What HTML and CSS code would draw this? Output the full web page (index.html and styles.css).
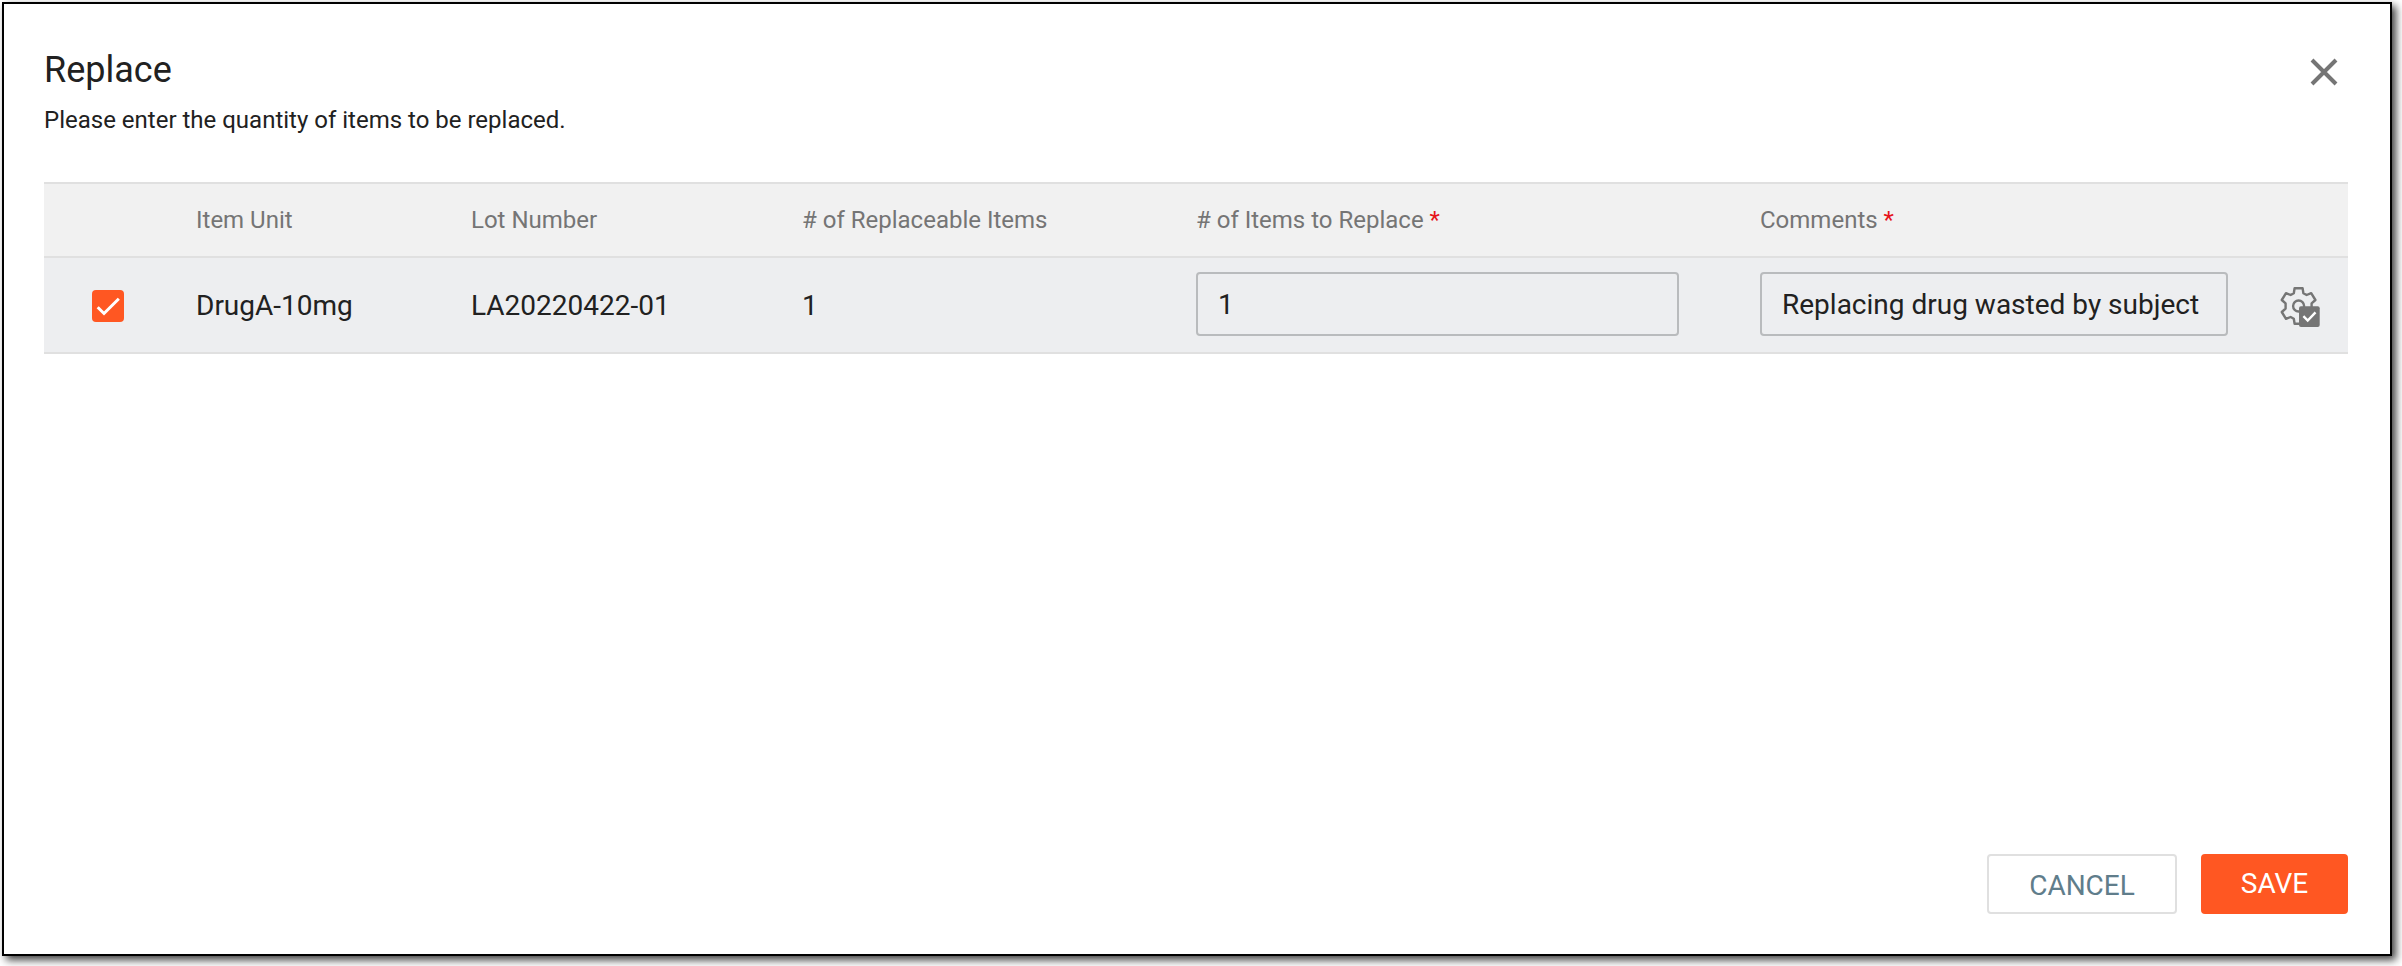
FILE: index.html
```
<!DOCTYPE html>
<html lang="en">
<head>
    <meta charset="UTF-8">
    <meta name="viewport" content="width=device-width, initial-scale=1.0">
    <title>Replace</title>
    <link rel="stylesheet" href="styles.css">
</head>
<body>
<div class="dialog">
    <div class="dialog-header">
        <div>
            <h1>Replace</h1>
            <p>Please enter the quantity of items to be replaced.</p>
        </div>
        <button class="close" aria-label="Close">
            <svg width="28" height="28" viewBox="0 0 28 28">
                <path d="M2 2L26 26M26 2L2 26"/>
            </svg>
        </button>
    </div>

    <table class="items">
        <colgroup>
            <col class="col-check">
            <col class="col-unit">
            <col class="col-lot">
            <col class="col-available">
            <col class="col-quantity">
            <col class="col-comments">
            <col>
        </colgroup>
        <thead>
        <tr>
            <th></th>
            <th>Item Unit</th>
            <th>Lot Number</th>
            <th># of Replaceable Items</th>
            <th># of Items to Replace <span class="required">*</span></th>
            <th>Comments <span class="required">*</span></th>
            <th></th>
        </tr>
        </thead>
        <tbody>
        <tr>
            <td>
                <span class="checkbox">
                    <svg width="32" height="32" viewBox="0 0 32 32">
                        <path d="M5.7 17.3L12 23.5L26.8 8.7"/>
                    </svg>
                </span>
            </td>
            <td>DrugA-10mg</td>
            <td>LA20220422-01</td>
            <td>1</td>
            <td><input class="quantity" type="text" value="1"></td>
            <td><input class="comments" type="text" value="Replacing drug wasted by subject"></td>
            <td>
                <svg class="gear" width="40" height="40" viewBox="0 0 40 40">
                    <g class="gear-outline">
                        <path d="M14.6 1.2H22.6L23.4 6.2L26.6 8L31.2 6.2L35.4 13L31.6 16.4V21.6L35.4 25L31.2 31.8L26.6 30L23.4 31.8L22.6 36.8H14.6L13.8 31.8L10.6 30L6 31.8L1.8 25L5.6 21.6V16.4L1.8 13L6 6.2L10.6 8L13.8 6.2Z"/>
                        <circle cx="18.6" cy="19" r="5.5"/>
                    </g>
                    <rect x="19" y="19.3" width="20.7" height="20.7" rx="2"/>
                    <path class="gear-check" d="M23.4 29.2L27.7 33.6L35.5 25.4"/>
                </svg>
            </td>
        </tr>
        </tbody>
    </table>

    <div class="dialog-footer">
        <button class="btn btn-cancel">CANCEL</button>
        <button class="btn btn-save">SAVE</button>
    </div>
</div>
</body>
</html>
```

FILE: styles.css
```
* {
    box-sizing: border-box;
}

body {
    margin: 0;
    height: 966px;
    padding: 2px;
    overflow: hidden;
    background-color: #fff;
    color: #212121;
    font-family: Roboto, sans-serif;
}

.dialog {
    display: flex;
    flex-direction: column;
    width: 2390px;
    height: 954px;
    padding: 42px 42px 40px 40px;
    border: 2px solid #000;
    background-color: #fff;
    box-shadow: 4px 4px 8px rgba(0, 0, 0, 0.75);
}

.dialog-header {
    display: flex;
    justify-content: space-between;
    height: 136px;
}

h1 {
    margin: 0;
    font-size: 36px;
    font-weight: 400;
    line-height: 48px;
}

p {
    margin: 10px 0 0;
    font-size: 24px;
    line-height: 32px;
}

.close {
    width: 28px;
    height: 28px;
    margin: 12px 10px 0 0;
    padding: 0;
    border: none;
    background: none;
    cursor: pointer;
}

.close svg {
    display: block;
    fill: none;
    stroke: #757575;
    stroke-width: 4;
}

/* Items table */
.items {
    width: 2304px;
    table-layout: fixed;
    border-spacing: 0;
    text-align: left;
}

.col-check {
    width: 152px;
}

.col-unit {
    width: 275px;
}

.col-lot {
    width: 331px;
}

.col-available {
    width: 394px;
}

.col-quantity {
    width: 564px;
}

.col-comments {
    width: 520px;
}

th {
    height: 76px;
    padding: 0;
    border-top: 2px solid #e0e0e0;
    border-bottom: 2px solid #e0e0e0;
    background-color: #f1f1f1;
    color: #757575;
    font-size: 24px;
    font-weight: 400;
}

td {
    height: 96px;
    padding: 0;
    border-bottom: 2px solid #e0e0e0;
    background-color: #edeef0;
    font-size: 28px;
}

.required {
    color: #e6141a;
}

.checkbox {
    display: block;
    width: 32px;
    height: 32px;
    margin: 2px 0 0 48px;
    border-radius: 4px;
    background-color: #ff5722;
}

.checkbox svg {
    display: block;
    fill: none;
    stroke: #fff;
    stroke-width: 3;
}

input {
    display: block;
    height: 64px;
    margin: 0 0 2px;
    padding: 0 20px;
    border: 2px solid #b9bbbd;
    border-radius: 4px;
    background: transparent;
    color: #212121;
    font: 28px Roboto, sans-serif;
}

.quantity {
    width: 483px;
}

.comments {
    width: 468px;
}

.gear {
    display: block;
    margin: 4px 0 0 0;
    fill: #757575;
}

.gear-outline {
    fill: none;
    stroke: #757575;
    stroke-width: 2.4;
    stroke-linejoin: round;
}

.gear-check {
    fill: none;
    stroke: #fff;
    stroke-width: 2.4;
}

/* Buttons */
.dialog-footer {
    display: flex;
    justify-content: flex-end;
    gap: 24px;
    margin-top: auto;
}

.btn {
    height: 60px;
    border: 2px solid #e0e0e0;
    border-radius: 4px;
    background-color: #fff;
    font: 28px Roboto, sans-serif;
    cursor: pointer;
}

.btn-cancel {
    width: 190px;
    padding: 2px 0 0;
    color: #607d8b;
}

.btn-save {
    width: 147px;
    padding: 0 0 2px;
    border-color: #ff5722;
    background-color: #ff5722;
    color: #fff;
}
```
